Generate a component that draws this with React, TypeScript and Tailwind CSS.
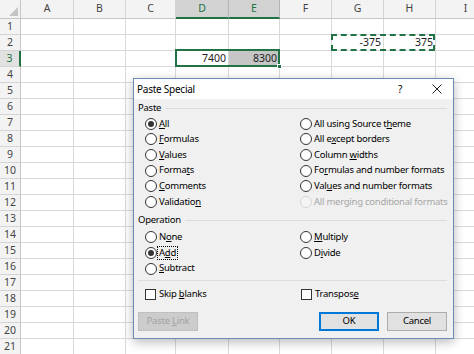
import { ReactNode } from 'react'

const cols = [
  { name: 'A', w: 'w-[53px]' },
  { name: 'B', w: 'w-[52px]' },
  { name: 'C', w: 'w-[50px]' },
  { name: 'D', w: 'w-[53px]', active: true },
  { name: 'E', w: 'w-[51px]', active: true },
  { name: 'F', w: 'w-[52px]' },
  { name: 'G', w: 'w-[52px]' },
  { name: 'H', w: 'w-[52px]' },
  { name: 'I', w: 'w-[60px]' },
]

const values: Record<string, string> = {
  D3: '7400',
  E3: '8300',
  G2: '-375',
  H2: '375',
}

const rows = Array.from({ length: 21 }, (_, i) => i + 1)

// "&" marks the access key, like a Win32 label
function Label({ text }: { text: string }) {
  const i = text.indexOf('&')
  if (i < 0) return <span>{text}</span>
  return (
    <span className="whitespace-pre">
      {text.slice(0, i)}
      <span className="underline underline-offset-[1px]">{text[i + 1]}</span>
      {text.slice(i + 2)}
    </span>
  )
}

function Radio({ label, checked, disabled, focus }: { label: string; checked?: boolean; disabled?: boolean; focus?: boolean }) {
  return (
    <div className="h-[15.6px] flex items-center gap-[2px] whitespace-nowrap">
      <span
        className={`w-[12px] h-[12px] rounded-full border flex items-center justify-center shrink-0 ${disabled ? 'border-[#d6d6d6] bg-[#f4f4f4]' : 'border-[#333] bg-white'}`}
      >
        {checked && <span className="w-[6px] h-[6px] rounded-full bg-[#333]" />}
      </span>
      <span className={`${disabled ? 'text-[#a6a6a6]' : 'text-black'} ${focus ? 'outline-1 outline-dotted outline-black px-[1px] -ml-[1px] leading-[12px]' : ''}`}>
        <Label text={label} />
      </span>
    </div>
  )
}

function Checkbox({ label }: { label: string }) {
  return (
    <div className="h-[16px] flex items-center gap-[3px] whitespace-nowrap">
      <span className="w-[11px] h-[11px] border border-[#333] bg-white shrink-0" />
      <Label text={label} />
    </div>
  )
}

function GroupLabel({ children, className = '' }: { children: ReactNode; className?: string }) {
  return (
    <div className={`h-[16px] flex items-center gap-[4px] ${className}`}>
      <span>{children}</span>
      <span className="flex-1 h-px bg-[#dcdcdc]" />
    </div>
  )
}

function Button({ children, primary, disabled, className = '' }: { children: ReactNode; primary?: boolean; disabled?: boolean; className?: string }) {
  let tone = 'bg-[#e1e1e1] border border-[#adadad] text-black'
  if (primary) tone = 'bg-[#e1e1e1] border-2 border-[#0078d7] text-black'
  if (disabled) tone = 'bg-[#cccccc] border border-[#bfbfbf] text-[#a3a3a3]'
  return (
    <div className={`w-[60px] h-[19px] flex items-center justify-center ${tone} ${className}`}>
      {children}
    </div>
  )
}

function PasteSpecial() {
  return (
    <div className="absolute left-[133px] top-[78px] w-[321px] h-[261px] border border-[#6a8bb3] bg-[#f0f0f0] shadow-[0_3px_10px_rgba(0,0,0,0.28)] flex flex-col font-['Noto_Sans',sans-serif] text-[9.5px] tracking-[-0.25px] text-black">
      {/* Title bar */}
      <div className="h-[20px] bg-white flex items-center pl-[3px] pr-[11px] shrink-0">
        <span className="text-[10px]">Paste Special</span>
        <span className="ml-auto mr-[30px] text-[10px]">?</span>
        <svg width="10" height="10" viewBox="0 0 10 10" className="text-[#222]">
          <path d="M0.5 0.5 L9.5 9.5 M9.5 0.5 L0.5 9.5" stroke="currentColor" strokeWidth="1" />
        </svg>
      </div>

      <div className="flex-1 flex flex-col pl-[4px] pr-[6px] pb-[7px]">
        <GroupLabel className="mt-[1px]">Paste</GroupLabel>
        <div className="grid grid-cols-[155px_1fr] pl-[7px]">
          <div>
            <Radio label="&All" checked />
            <Radio label="&Formulas" />
            <Radio label="&Values" />
            <Radio label="Forma&ts" />
            <Radio label="&Comments" />
            <Radio label="Validatio&n" />
          </div>
          <div>
            <Radio label="All using Source t&heme" />
            <Radio label="All e&xcept borders" />
            <Radio label="Column &widths" />
            <Radio label="Fo&rmulas and number formats" />
            <Radio label="Val&ues and number formats" />
            <Radio label="All merging conditional formats" disabled />
          </div>
        </div>

        <GroupLabel className="mt-[3px]">Operation</GroupLabel>
        <div className="grid grid-cols-[155px_1fr] pl-[7px] mt-[1px]">
          <div>
            <Radio label="N&one" />
            <Radio label="A&dd" checked focus />
            <Radio label="&Subtract" />
          </div>
          <div>
            <Radio label="&Multiply" />
            <Radio label="D&ivide" />
          </div>
        </div>

        <div className="h-px bg-[#dcdcdc] mt-[4px]" />

        <div className="grid grid-cols-[156px_1fr] pl-[7px] mt-[5px]">
          <Checkbox label="Skip &blanks" />
          <Checkbox label="Transpos&e" />
        </div>

        <div className="mt-auto flex">
          <Button disabled>
            <Label text="Paste &Link" />
          </Button>
          <Button primary className="ml-auto">OK</Button>
          <Button className="ml-[8px]">Cancel</Button>
        </div>
      </div>
    </div>
  )
}

export default function App() {
  return (
    <div className="relative w-[474px] h-[354px] overflow-hidden bg-white font-['Noto_Sans',sans-serif] text-[10.5px] text-[#222]">
      {/* Column headers */}
      <div className="flex h-[19px]">
        <div className="w-[21px] shrink-0 border-r border-b border-[#c6c6c6] bg-[#f3f3f3] flex items-end justify-end p-[2px]">
          <svg width="9" height="9" viewBox="0 0 9 9">
            <path d="M9 0 L9 9 L0 9 Z" fill="#c4c4c4" />
          </svg>
        </div>
        {cols.map((c) => (
          <div
            key={c.name}
            className={`${c.w} shrink-0 flex items-center justify-center border-r ${c.active ? 'bg-[#d2d2d2] text-[#217346] border-r-[#b4b4b4] border-b-2 border-b-[#217346]' : 'bg-[#f3f3f3] text-[#444] border-r-[#d4d4d4] border-b border-b-[#c6c6c6]'}`}
          >
            {c.name}
          </div>
        ))}
      </div>

      {/* Rows */}
      {rows.map((r) => (
        <div key={r} className="flex h-[16px]">
          <div
            className={`w-[21px] shrink-0 flex items-center justify-center border-b border-b-[#d4d4d4] ${r === 3 ? 'bg-[#e1e1e1] text-[#217346] border-r-2 border-r-[#217346]' : 'bg-[#f3f3f3] text-[#444] border-r border-r-[#c6c6c6]'}`}
          >
            {r}
          </div>
          {cols.map((c) => {
            const key = `${c.name}${r}`
            return (
              <div
                key={key}
                className={`${c.w} shrink-0 border-r border-b border-[#d9d9d9] flex items-center justify-end pr-[2px] ${key === 'E3' ? 'bg-[#c6c6c6]' : ''}`}
              >
                {values[key]}
              </div>
            )
          })}
        </div>
      ))}

      {/* Selection D3:E3 */}
      <div className="absolute left-[175px] top-[49px] w-[105px] h-[18px] border-2 border-[#217346]" />
      <div className="absolute left-[277px] top-[64px] w-[5px] h-[5px] bg-[#217346] border border-white" />

      {/* Copy marquee G2:H2 */}
      <div className="absolute left-[331px] top-[34px] w-[104px] h-[17px] border-2 border-dashed border-[#217346]" />

      <PasteSpecial />
    </div>
  )
}
